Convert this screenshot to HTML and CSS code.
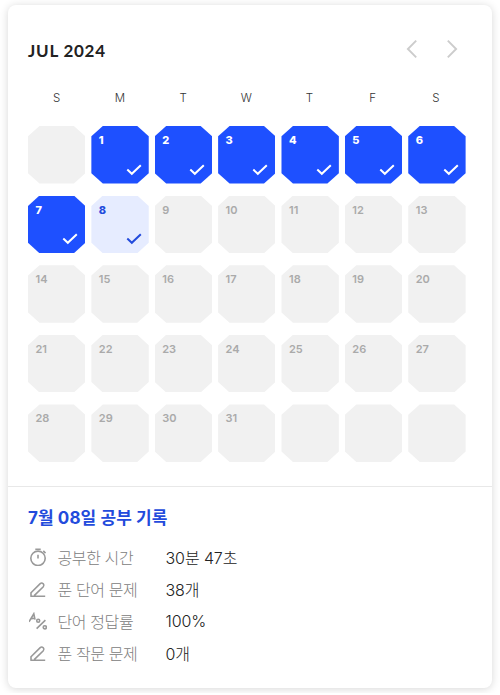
FILE: index.html
```html
<!DOCTYPE html>
<html lang="ko">
<head>
    <meta charset="UTF-8">
    <title>공부 기록</title>
    <link rel="stylesheet" href="styles.css">
</head>

<body>
<svg class="icons">
    <symbol id="check" viewBox="0 0 16 12">
        <path d="M1.3 5.6 L5.8 9.8 L14.8 1.2"/>
    </symbol>
    <symbol id="pen" viewBox="0 0 18 18">
        <path d="M2 15.8 V12.8 L11.2 3.6 Q12.7 2.4 14.3 3.8 Q15.6 5.3 14.3 6.8 L5.2 15.6 M1.3 16.2 H16.2"/>
    </symbol>
</svg>
<div class="card">
    <div class="calendar">
        <div class="header">
            <h1>JUL 2024</h1>
            <div class="arrow">
                <svg viewBox="0 0 12 20"><path d="M10.2 1.7 L1.9 10 L10.2 18.3"/></svg>
                <svg viewBox="0 0 12 20"><path d="M1.8 1.7 L10.1 10 L1.8 18.3"/></svg>
            </div>
        </div>
        <ul class="week">
            <li>S</li>
            <li>M</li>
            <li>T</li>
            <li>W</li>
            <li>T</li>
            <li>F</li>
            <li>S</li>
        </ul>
        <ul class="days">
            <li></li>
            <li class="done">1<svg><use href="#check"/></svg></li>
            <li class="done">2<svg><use href="#check"/></svg></li>
            <li class="done">3<svg><use href="#check"/></svg></li>
            <li class="done">4<svg><use href="#check"/></svg></li>
            <li class="done">5<svg><use href="#check"/></svg></li>
            <li class="done">6<svg><use href="#check"/></svg></li>
            <li class="done">7<svg><use href="#check"/></svg></li>
            <li class="today">8<svg><use href="#check"/></svg></li>
            <li>9</li>
            <li>10</li>
            <li>11</li>
            <li>12</li>
            <li>13</li>
            <li>14</li>
            <li>15</li>
            <li>16</li>
            <li>17</li>
            <li>18</li>
            <li>19</li>
            <li>20</li>
            <li>21</li>
            <li>22</li>
            <li>23</li>
            <li>24</li>
            <li>25</li>
            <li>26</li>
            <li>27</li>
            <li>28</li>
            <li>29</li>
            <li>30</li>
            <li>31</li>
            <li></li>
            <li></li>
            <li></li>
        </ul>
    </div>
    <div class="record">
        <h2>7월 08일 공부 기록</h2>
        <ul>
            <li>
                <svg viewBox="0 0 18 18"><circle cx="9" cy="10.3" r="7.2"/><path d="M6.3 1.2 H11.7 M9 6.8 V10.6 M14.3 2.9 L16.5 5.1"/></svg>
                <span class="label">공부한 시간</span>
                <span class="value">30분 47초</span>
            </li>
            <li>
                <svg><use href="#pen"/></svg>
                <span class="label">푼 단어 문제</span>
                <span class="value">38개</span>
            </li>
            <li>
                <svg viewBox="0 0 18 18"><path d="M0 9.8 L4.8 1.8 L6 7.6 M2.2 6.8 L5.8 6.2 M7.6 16.6 L16.4 8.2"/><circle cx="9.2" cy="8.8" r="1.5"/><circle cx="15.8" cy="15.3" r="1.6"/></svg>
                <span class="label">단어 정답률</span>
                <span class="value">100%</span>
            </li>
            <li>
                <svg><use href="#pen"/></svg>
                <span class="label">푼 작문 문제</span>
                <span class="value">0개</span>
            </li>
        </ul>
    </div>
</div>
</body>
</html>
```

FILE: styles.css
```css
*{
    margin:0;
    padding:0;
    box-sizing: border-box;
}
ul{
    list-style: none;
}
body{
    background: #fff;
    font-family: Inter, "Noto Sans CJK KR", sans-serif;
}
svg{
    fill: none;
    stroke: currentColor;
}
.icons{
    display: none;
}

.card{
    width: 484px;
    height: 683px;
    margin: 5px 8px;
    border-radius: 8px;
    background: #fff;
    box-shadow: 0 1px 8px rgba(0,0,0,0.16);
}
.calendar{
    height: 482px;
    padding: 32px 26.4px 0 20px;
    border-bottom: 1px solid #e8e8e8;
}
.header{
    display: flex;
    justify-content: space-between;
    height: 26px;
}
.header h1{
    font: 700 17px/28px Lato, sans-serif;
    letter-spacing: 0.75px;
    color: #222;
}
.arrow{
    display: flex;
    gap: 28px;
    padding: 2px 8px 0 0;
    color: #ccc;
}
.arrow svg{
    width: 12px;
    height: 20px;
    stroke-width: 1.9;
}

.week{
    display: grid;
    grid-template-columns: repeat(7, 1fr);
    column-gap: 6px;
    margin-top: 27px;
    padding-right: 1px;
    font-size: 11.5px;
    font-weight: 300;
    line-height: 16px;
    text-align: center;
    color: #333;
}
.days{
    display: grid;
    grid-template-columns: repeat(7, 1fr);
    grid-auto-rows: 57.6px;
    gap: 12px 6px;
    margin-top: 20px;
}
.days li{
    display: flex;
    flex-direction: column;
    justify-content: space-between;
    padding: 7px 7px 8px 7.5px;
    background: #f1f1f1;
    color: #aaa;
    font-size: 11px;
    font-weight: 600;
    line-height: 15px;
    clip-path: polygon(20% 0, 80% 0, 100% 18%, 100% 82%, 80% 100%, 20% 100%, 0 82%, 0 18%);
}
.days svg{
    align-self: flex-end;
    width: 16px;
    height: 12px;
    stroke-width: 2;
}
.days .done{
    background: #1e50ff;
    color: #fff;
    font-weight: 800;
}
.days .today{
    background: #e6ecff;
    color: #234bdc;
    font-weight: 800;
}

.record{
    padding: 18px 20px 0;
}
.record h2{
    font-size: 17px;
    line-height: 26px;
    font-weight: 700;
    letter-spacing: 0.1px;
    color: #234bdc;
}
.record ul{
    margin-top: 10px;
}
.record li{
    display: flex;
    align-items: center;
    height: 32px;
    font-size: 16px;
    font-weight: 300;
    letter-spacing: -0.4px;
}
.record svg{
    width: 18px;
    height: 18px;
    margin: 0 10.5px 0 1px;
    color: #999;
    stroke-width: 1.6;
}
.label{
    width: 108px;
    color: #808080;
}
.value{
    letter-spacing: -0.1px;
    color: #222;
}
```
